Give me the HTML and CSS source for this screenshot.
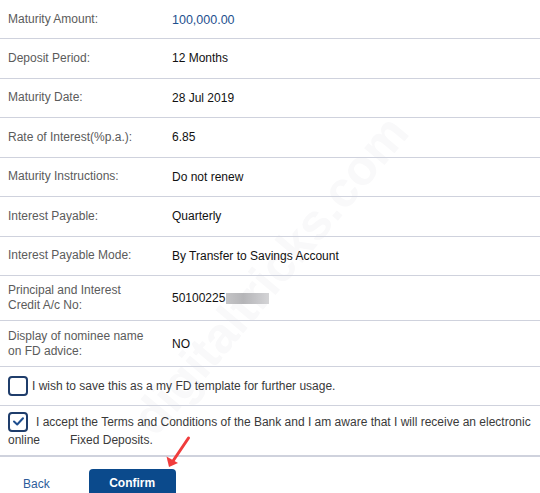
FILE: index.html
```html
<!DOCTYPE html>
<html>
<head>
<meta charset="utf-8">
<link rel="stylesheet" href="styles.css">
</head>
<body>
<div class="page">
  <div class="watermark"><span>digitaltricks.com</span></div>
  <div class="content">
    <div class="row first"><div class="label">Maturity Amount:</div><div class="value amount">100,000.00</div></div>
    <div class="row"><div class="label">Deposit Period:</div><div class="value">12 Months</div></div>
    <div class="row"><div class="label">Maturity Date:</div><div class="value">28 Jul 2019</div></div>
    <div class="row"><div class="label">Rate of Interest(%p.a.):</div><div class="value">6.85</div></div>
    <div class="row"><div class="label">Maturity Instructions:</div><div class="value">Do not renew</div></div>
    <div class="row"><div class="label">Interest Payable:</div><div class="value">Quarterly</div></div>
    <div class="row"><div class="label">Interest Payable Mode:</div><div class="value">By Transfer to Savings Account</div></div>
    <div class="row tall"><div class="label">Principal and Interest<br>Credit A/c No:</div><div class="value">50100225<span class="blur"></span></div></div>
    <div class="row tall"><div class="label">Display of nominee name<br>on FD advice:</div><div class="value">NO</div></div>
    <div class="check-row one">
      <span class="box"></span><span class="ctext">I wish to save this as a my FD template for further usage.</span>
    </div>
    <div class="check-row two">
      <div class="line1"><span class="box checked"><svg viewBox="0 0 15 15" width="15" height="15"><path d="M3 7.5 L6.2 10.5 L12 4.2" fill="none" stroke="#1f4f8f" stroke-width="2" stroke-linecap="round" stroke-linejoin="round"/></svg></span><span class="ctext2">I accept the Terms and Conditions of the Bank and I am aware that I will receive an electronic</span></div>
      <div class="line2"><span>online</span><span class="gap2">Fixed Deposits.</span></div>
    </div>
    <div class="actions">
      <span class="back">Back</span>
      <span class="confirm">Confirm</span>
    </div>
  </div>
  <svg class="arrow" width="40" height="40" viewBox="160 432 40 40">
    <line x1="188.5" y1="438" x2="173" y2="461" stroke="#f03c3c" stroke-width="3" stroke-linecap="round"/>
    <polygon points="169,467 166.5,456.5 178,463" fill="#f03c3c"/>
  </svg>
</div>
</body>
</html>
```

FILE: styles.css
```css
html, body {
  margin: 0;
  padding: 0;
  background: #ffffff;
}
body {
  width: 540px;
  height: 493px;
  overflow: hidden;
  font-family: "Liberation Sans", Arial, sans-serif;
  font-size: 12px;
}
.page {
  position: relative;
  width: 540px;
  height: 493px;
  overflow: hidden;
}
.watermark {
  position: absolute;
  left: 0;
  top: 245px;
  width: 540px;
  height: 60px;
  line-height: 60px;
  text-align: center;
  font-size: 50px;
  font-weight: bold;
  color: #f9f9fa;
  transform: rotate(-50deg);
  transform-origin: 270px 30px;
  white-space: nowrap;
  z-index: 0;
}
.content {
  position: relative;
  z-index: 1;
}
.row {
  display: flex;
  align-items: center;
  box-sizing: border-box;
  height: 39.5px;
  border-bottom: 1px solid #cfd2dd;
}
.row.first {
  height: 39px;
}
.row.tall {
  height: 45.4px;
}
.label {
  width: 164px;
  padding-left: 8px;
  color: #5b5b5b;
  line-height: 15px;
}
.value {
  color: #111111;
  display: flex;
  align-items: center;
}
.value.amount {
  color: #1e4f8e;
  font-size: 12.5px;
  padding-top: 1px;
}
.blur {
  display: inline-block;
  width: 43px;
  height: 11px;
  margin-left: 1px;
  background: linear-gradient(90deg, #c4c4c6 0%, #b5b5b8 40%, #c9c9cc 80%, #d4d4d6 100%);
  filter: blur(0.6px);
}
.check-row {
  box-sizing: border-box;
  border-bottom: 1px solid #cfd2dd;
  color: #3a3a3a;
}
.check-row.one {
  height: 39px;
  display: flex;
  align-items: center;
  padding-left: 8px;
  padding-top: 1px;
}
.box {
  display: inline-flex;
  align-items: center;
  justify-content: center;
  box-sizing: border-box;
  width: 20px;
  height: 20px;
  border: 2px solid #1f3d6b;
  border-radius: 4px;
  background: #fff;
  flex: none;
}
.ctext {
  margin-left: 4px;
}
.check-row.two {
  height: 51px;
  border-bottom: 2px solid #cfd2dd;
  padding-top: 6px;
}
.line1 {
  display: flex;
  align-items: center;
  padding-left: 8px;
  white-space: nowrap;
}
.ctext2 {
  margin-left: 8px;
}
.line2 {
  padding-left: 8px;
  line-height: 16px;
}
.gap2 {
  margin-left: 30px;
}
.actions {
  display: flex;
  align-items: flex-start;
  padding-top: 12px;
}
.back {
  color: #2c5c9a;
  margin-left: 23px;
  margin-top: 8px;
  font-size: 12px;
}
.confirm {
  margin-left: 39px;
  width: 87px;
  height: 32px;
  box-sizing: border-box;
  padding-top: 7px;
  text-align: center;
  background: #0b4a8c;
  color: #ffffff;
  font-weight: bold;
  border-radius: 4px 4px 0 0;
}
.arrow {
  position: absolute;
  left: 160px;
  top: 432px;
  z-index: 2;
}
```
